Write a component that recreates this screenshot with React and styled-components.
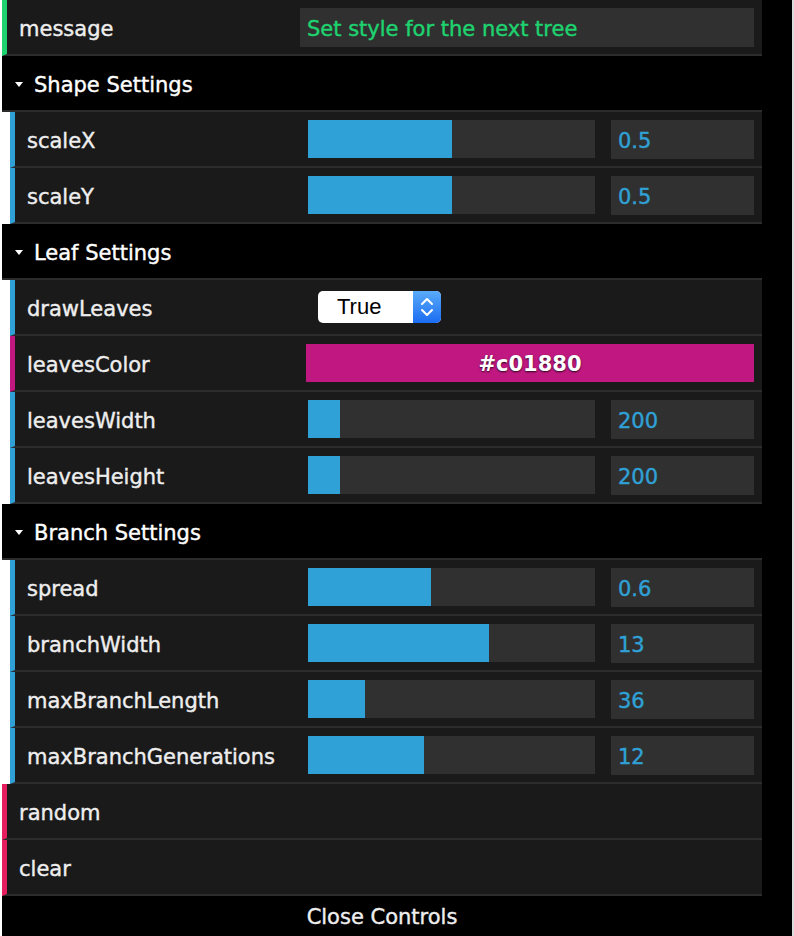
import React from 'react';
import styled, { createGlobalStyle } from 'styled-components';

const GlobalStyle = createGlobalStyle`
  html, body {
    margin: 0;
    padding: 0;
    background: #fff;
  }
  * {
    box-sizing: border-box;
  }
`;

const Page = styled.div`
  display: flex;
  min-height: 936px;
  padding-left: 2px;
  font-family: 'DejaVu Sans', 'Liberation Sans', sans-serif;
  font-size: 21px;
  -webkit-text-stroke: 0.4px currentColor;
`;

const Panel = styled.div`
  width: 790px;
  display: grid;
  grid-template-columns: 760px 30px;
  align-content: start;
`;

const Edge = styled.div`
  flex: 1;
  background: #dcdcdc;
`;

const List = styled.ul`
  list-style: none;
  margin: 0;
  padding: 0;
`;

const Gutter = styled.div`
  background: #000;
`;

const Row = styled.li`
  display: grid;
  grid-template-columns: 293px 1fr;
  align-items: center;
  height: 56px;
  padding-right: 8px;
  background: #1a1a1a;
  border-left: 5px solid ${p => p.$accent};
  border-bottom: 2px solid #2c2c2c;
`;

const Label = styled.span`
  padding: 4px 0 0 12px;
  color: #eee;
  white-space: nowrap;
`;

const TextInput = styled.div`
  height: 39px;
  display: flex;
  align-items: center;
  padding: 3px 0 0 7px;
  background: #303030;
  color: #1ed36f;
`;

const Folder = styled.li`
  list-style: none;
`;

const FolderTitle = styled.div`
  display: flex;
  align-items: center;
  gap: 11px;
  height: 56px;
  padding: 3px 0 0 13px;
  background: #000;
  color: #fff;
  border-bottom: 2px solid #2c2c2c;
`;

const FolderBody = styled.ul`
  list-style: none;
  margin: 0;
  padding: 0 0 0 8px;
`;

const SliderGroup = styled.div`
  display: flex;
  align-items: center;
  gap: 16px;
`;

const Track = styled.div`
  flex: 1;
  height: 38px;
  background: #303030;
`;

const Fill = styled.div`
  height: 100%;
  background: #2fa1d6;
`;

const NumberBox = styled.div`
  width: 143px;
  height: 39px;
  display: flex;
  align-items: center;
  padding: 3px 0 0 7px;
  background: #303030;
  color: #2fa1d6;
`;

const Select = styled.div`
  margin-left: 10px;
  width: 123px;
  height: 32px;
  display: flex;
  background: #fff;
  border-radius: 5px;
  overflow: hidden;
  font-family: 'Liberation Sans', sans-serif;
  font-size: 22px;
  color: #000;
  -webkit-text-stroke: 0;
`;

const SelectValue = styled.span`
  flex: 1;
  display: flex;
  align-items: center;
  padding-left: 19px;
`;

const Stepper = styled.span`
  width: 28px;
  display: flex;
  align-items: center;
  justify-content: center;
  background: linear-gradient(#5aabf8, #1b6cf2);
`;

const Swatch = styled.div`
  margin-left: -2px;
  height: 38px;
  display: flex;
  align-items: center;
  justify-content: center;
  padding-top: 2px;
  background: ${p => p.$color};
  color: #fff;
  font-weight: bold;
  -webkit-text-stroke: 0;
  text-shadow: 0 1px 2px rgba(0, 0, 0, 0.8);
`;

const CloseButton = styled.div`
  grid-column: 1 / -1;
  height: 40px;
  display: flex;
  align-items: center;
  justify-content: center;
  padding: 2px 30px 0 0;
  background: #000;
  color: #eee;
`;

const BLUE = '#2fa1d6';
const PINK = '#e61d5f';

const Arrow = () => (
  <svg width="8" height="5" viewBox="0 0 8 5">
    <path d="M0 0 L8 0 L4 5 Z" fill="#fff" />
  </svg>
);

const Chevrons = () => (
  <svg width="14" height="22" viewBox="0 0 14 22">
    <path d="M2 8 L7 3 L12 8 M2 14 L7 19 L12 14" fill="none" stroke="#fff" strokeWidth="2" strokeLinecap="round" strokeLinejoin="round" />
  </svg>
);

const SliderRow = ({ name, value, percent }) => (
  <Row $accent={BLUE}>
    <Label>{name}</Label>
    <SliderGroup>
      <Track>
        <Fill style={{ width: `${percent}%` }} />
      </Track>
      <NumberBox>{value}</NumberBox>
    </SliderGroup>
  </Row>
);

const FolderSection = ({ title, children }) => (
  <Folder>
    <FolderTitle>
      <Arrow />
      {title}
    </FolderTitle>
    <FolderBody>{children}</FolderBody>
  </Folder>
);

const shapeSettings = [
  { name: 'scaleX', value: '0.5', percent: 50 },
  { name: 'scaleY', value: '0.5', percent: 50 },
];

const leafSizes = [
  { name: 'leavesWidth', value: '200', percent: 11 },
  { name: 'leavesHeight', value: '200', percent: 11 },
];

const branchSettings = [
  { name: 'spread', value: '0.6', percent: 43 },
  { name: 'branchWidth', value: '13', percent: 63.2 },
  { name: 'maxBranchLength', value: '36', percent: 20 },
  { name: 'maxBranchGenerations', value: '12', percent: 40.3 },
];

export default function App() {
  return (
    <Page>
      <GlobalStyle />
      <Panel>
        <List>
          <Row $accent="#1ed36f">
            <Label>message</Label>
            <TextInput>Set style for the next tree</TextInput>
          </Row>

          <FolderSection title="Shape Settings">
            {shapeSettings.map(s => (
              <SliderRow key={s.name} {...s} />
            ))}
          </FolderSection>

          <FolderSection title="Leaf Settings">
            <Row $accent={BLUE}>
              <Label>drawLeaves</Label>
              <Select>
                <SelectValue>True</SelectValue>
                <Stepper>
                  <Chevrons />
                </Stepper>
              </Select>
            </Row>
            <Row $accent="#c01880">
              <Label>leavesColor</Label>
              <Swatch $color="#c01880">#c01880</Swatch>
            </Row>
            {leafSizes.map(s => (
              <SliderRow key={s.name} {...s} />
            ))}
          </FolderSection>

          <FolderSection title="Branch Settings">
            {branchSettings.map(s => (
              <SliderRow key={s.name} {...s} />
            ))}
          </FolderSection>

          <Row $accent={PINK}>
            <Label>random</Label>
          </Row>
          <Row $accent={PINK}>
            <Label>clear</Label>
          </Row>
        </List>
        <Gutter />
        <CloseButton>Close Controls</CloseButton>
      </Panel>
      <Edge />
    </Page>
  );
}
